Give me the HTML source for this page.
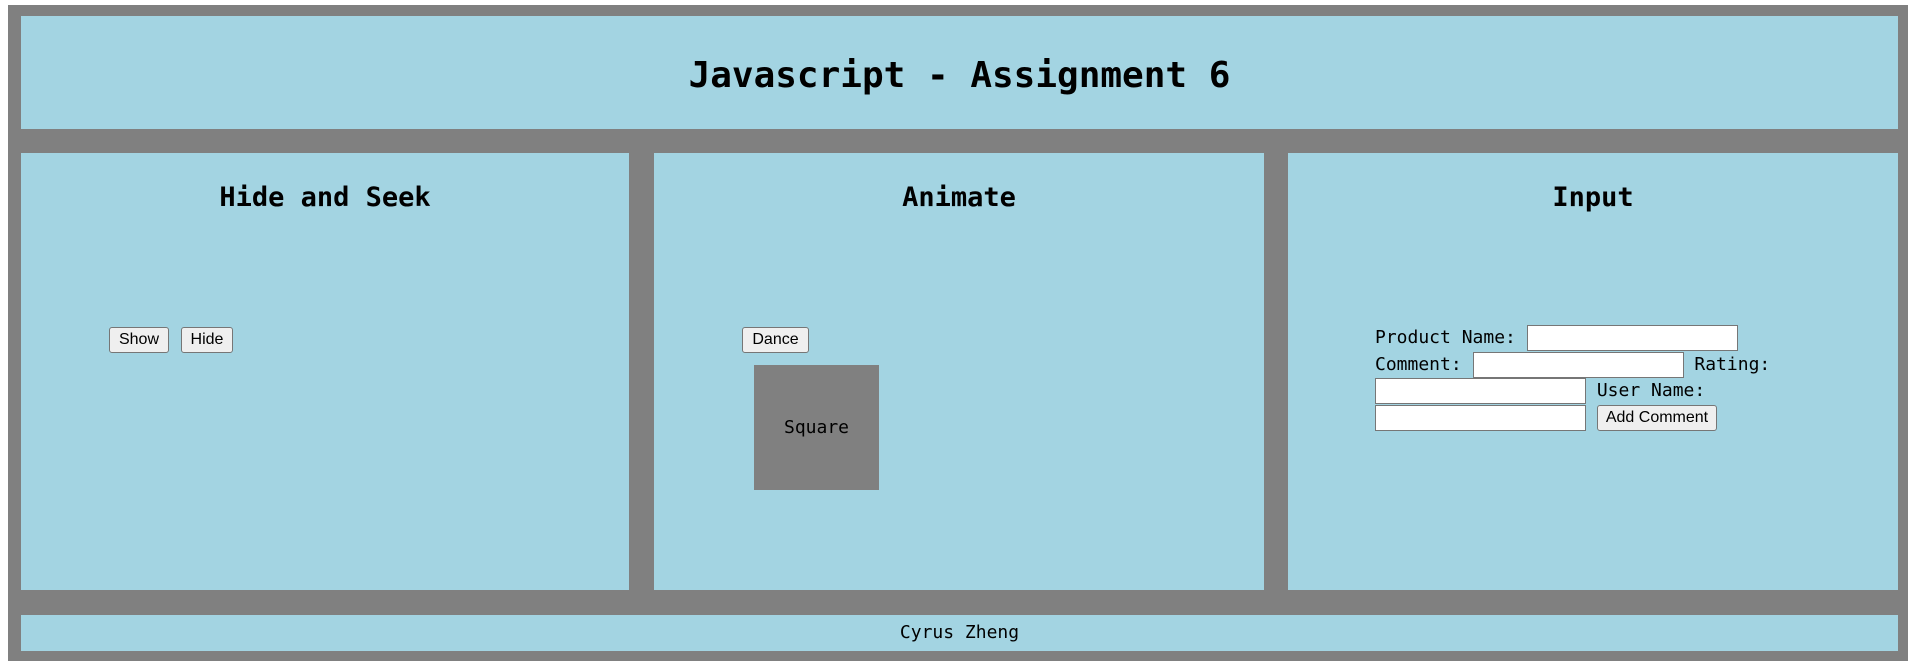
<!DOCTYPE html>
<html><head><meta charset="utf-8"><style>
*{box-sizing:border-box}
html,body{margin:0;padding:0;background:#fff;width:1916px;height:667px;overflow:hidden}
.g{position:absolute;left:8px;top:5px;width:1900px;height:656px;background:#808080}
.b{position:absolute;background:#a3d4e2}
.mono{font-family:"DejaVu Sans Mono","Liberation Mono",monospace}
h1,h2{margin:0;font-weight:bold;text-align:center;position:absolute;left:0;right:0;color:#000}
h1{font-size:36px}
h2{font-size:27px;top:182px}
button{font-family:"Liberation Sans",Arial,sans-serif;font-size:16px;height:26px;padding:0 8px;background:#efefef;border:1px solid #767676;border-radius:3px;color:#000;position:absolute}
input{width:211px;height:26px;border:1px solid #767676;background:#fff;vertical-align:middle;margin:0}
.form{position:absolute;left:1375px;top:325px;width:402px;font-size:18px;line-height:26.5px}
.form button{position:static;vertical-align:middle;height:26px}
</style></head><body>
<div class="g"></div>
<div class="b" style="left:21px;top:16px;width:1877px;height:113px"><h1 class="mono" style="top:39px">Javascript - Assignment 6</h1></div>
<div class="b" style="left:21px;top:153px;width:608px;height:437px"></div>
<div class="b" style="left:654px;top:153px;width:610px;height:437px"></div>
<div class="b" style="left:1288px;top:153px;width:610px;height:437px"></div>
<h2 class="mono" style="left:21px;width:608px">Hide and Seek</h2>
<h2 class="mono" style="left:654px;width:610px">Animate</h2>
<h2 class="mono" style="left:1288px;width:610px">Input</h2>
<button style="left:109px;top:327px;width:60px">Show</button>
<button style="left:181px;top:327px;width:52px">Hide</button>
<button style="left:742px;top:327px;width:67px">Dance</button>
<div class="mono" style="position:absolute;left:754px;top:365px;width:125px;height:125px;background:#808080;display:flex;align-items:center;justify-content:center;font-size:18px">Square</div>
<div class="form mono">Product Name: <input> Comment: <input> Rating: <input> User Name: <input> <button>Add Comment</button></div>
<div class="b" style="left:21px;top:615px;width:1877px;height:36px"></div>
<div class="mono" style="position:absolute;left:21px;width:1877px;top:620px;text-align:center;font-size:18px;line-height:26px">Cyrus Zheng</div>
</body></html>
